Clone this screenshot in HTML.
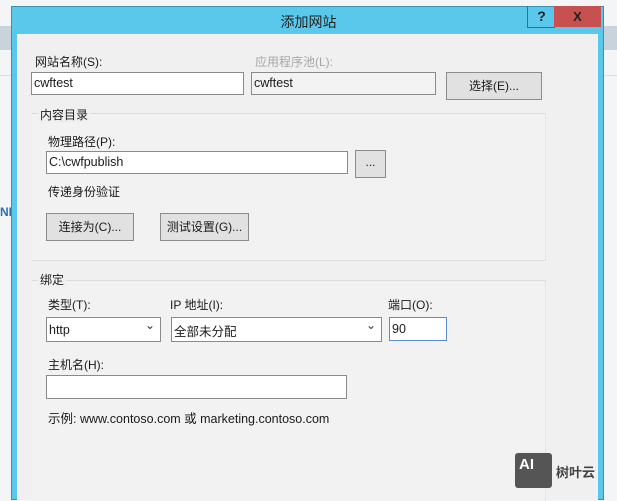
<!DOCTYPE html>
<html><head><meta charset="utf-8"><style>
body{margin:0;width:617px;height:500px;overflow:hidden;position:relative;background:#f4f5f6;font-family:"Liberation Sans","Noto Sans CJK SC",sans-serif;font-size:12px;color:#1a1a1a}
.a{position:absolute}
.inp{position:absolute;background:#fff;border:1px solid #8a8a8a;box-sizing:border-box;padding:3px 2px;font-size:12.5px}
.btn{position:absolute;background:#e1e1e1;border:1px solid #8c8c8c;box-sizing:border-box;text-align:center;font-size:12px}
.lbl{position:absolute;font-size:12px;white-space:nowrap}
.sel::after{content:"⌄";position:absolute;right:5px;top:0px;font-size:12px;color:#333}
</style></head><body>
<div class="a" style="left:0;top:26px;width:617px;height:24px;background:#c9d3dc"></div>
<div class="a" style="left:0;top:75px;width:617px;height:1px;background:#d8dde2"></div>
<div class="a" style="left:0;top:205px;width:12px;height:20px;color:#2a6fb8;font-weight:bold;font-size:12px">NE</div>
<div class="a" style="left:11px;top:6px;width:593px;height:494px;background:#5ac8ea;border:1px solid #3c8fae;box-sizing:border-box"></div>
<div class="a" style="left:17px;top:34px;width:581px;height:466px;background:#f0f0f0"></div>
<div class="lbl" style="left:0;width:617px;top:12px;text-align:center;font-size:14px;color:#222">添加网站</div>
<div class="a" style="left:527px;top:6px;width:27px;height:21px;border-left:1px solid #3c6f86;border-bottom:1px solid #3c6f86;text-align:center;font-weight:bold;font-size:14px;line-height:21px;color:#222">?</div>
<div class="a" style="left:554px;top:6px;width:47px;height:21px;background:#c75050;text-align:center;font-weight:bold;font-size:13px;line-height:21px;color:#222">X</div>

<div class="lbl" style="left:35px;top:53px">网站名称(S):</div>
<div class="inp" style="left:31px;top:72px;width:213px;height:23px">cwftest</div>
<div class="lbl" style="left:255px;top:53px;color:#a6a6a6">应用程序池(L):</div>
<div class="inp" style="left:251px;top:72px;width:185px;height:23px;background:#f3f3f3">cwftest</div>
<div class="btn" style="left:446px;top:72px;width:96px;height:28px;line-height:26px">选择(E)...</div>

<div class="a" style="left:32px;top:113px;width:513px;height:146px;border-top:1px solid #dcdcdc;border-bottom:1px solid #dcdcdc;border-right:1px solid #e4e4e4;background:#f2f2f2"></div>
<div class="lbl" style="left:38px;top:106px;background:#f0f0f0;padding:0 2px">内容目录</div>
<div class="lbl" style="left:48px;top:133px">物理路径(P):</div>
<div class="inp" style="left:46px;top:151px;width:302px;height:23px">C:\cwfpublish</div>
<div class="btn" style="left:355px;top:150px;width:31px;height:28px;line-height:22px">...</div>
<div class="lbl" style="left:48px;top:183px">传递身份验证</div>
<div class="btn" style="left:46px;top:213px;width:88px;height:28px;line-height:26px">连接为(C)...</div>
<div class="btn" style="left:160px;top:213px;width:89px;height:28px;line-height:26px">测试设置(G)...</div>

<div class="a" style="left:32px;top:280px;width:513px;height:220px;border-top:1px solid #dcdcdc;border-right:1px solid #e4e4e4;background:#f2f2f2"></div>
<div class="lbl" style="left:38px;top:271px;background:#f0f0f0;padding:0 2px">绑定</div>
<div class="lbl" style="left:48px;top:296px">类型(T):</div>
<div class="lbl" style="left:170px;top:296px">IP 地址(I):</div>
<div class="lbl" style="left:388px;top:296px">端口(O):</div>
<div class="inp sel" style="left:46px;top:317px;width:115px;height:25px;padding-top:5px">http</div>
<div class="inp sel" style="left:171px;top:317px;width:211px;height:25px;padding-top:3px">全部未分配</div>
<div class="inp" style="left:389px;top:317px;width:58px;height:24px;border-color:#5a8fc8;padding-top:4px">90</div>
<div class="lbl" style="left:48px;top:356px">主机名(H):</div>
<div class="inp" style="left:46px;top:375px;width:301px;height:24px"></div>
<div class="lbl" style="left:48px;top:408px;font-size:12.5px">示例: www.contoso.com 或 marketing.contoso.com</div>

<div class="a" style="left:515px;top:453px;width:37px;height:35px;background:#555;border-radius:3px;color:#fff;font-weight:bold;font-size:15px;line-height:24px;padding-left:4px;box-sizing:border-box">AI</div>
<div class="lbl" style="left:556px;top:462px;font-size:13px;color:#444;font-weight:bold">树叶云</div>
</body></html>
